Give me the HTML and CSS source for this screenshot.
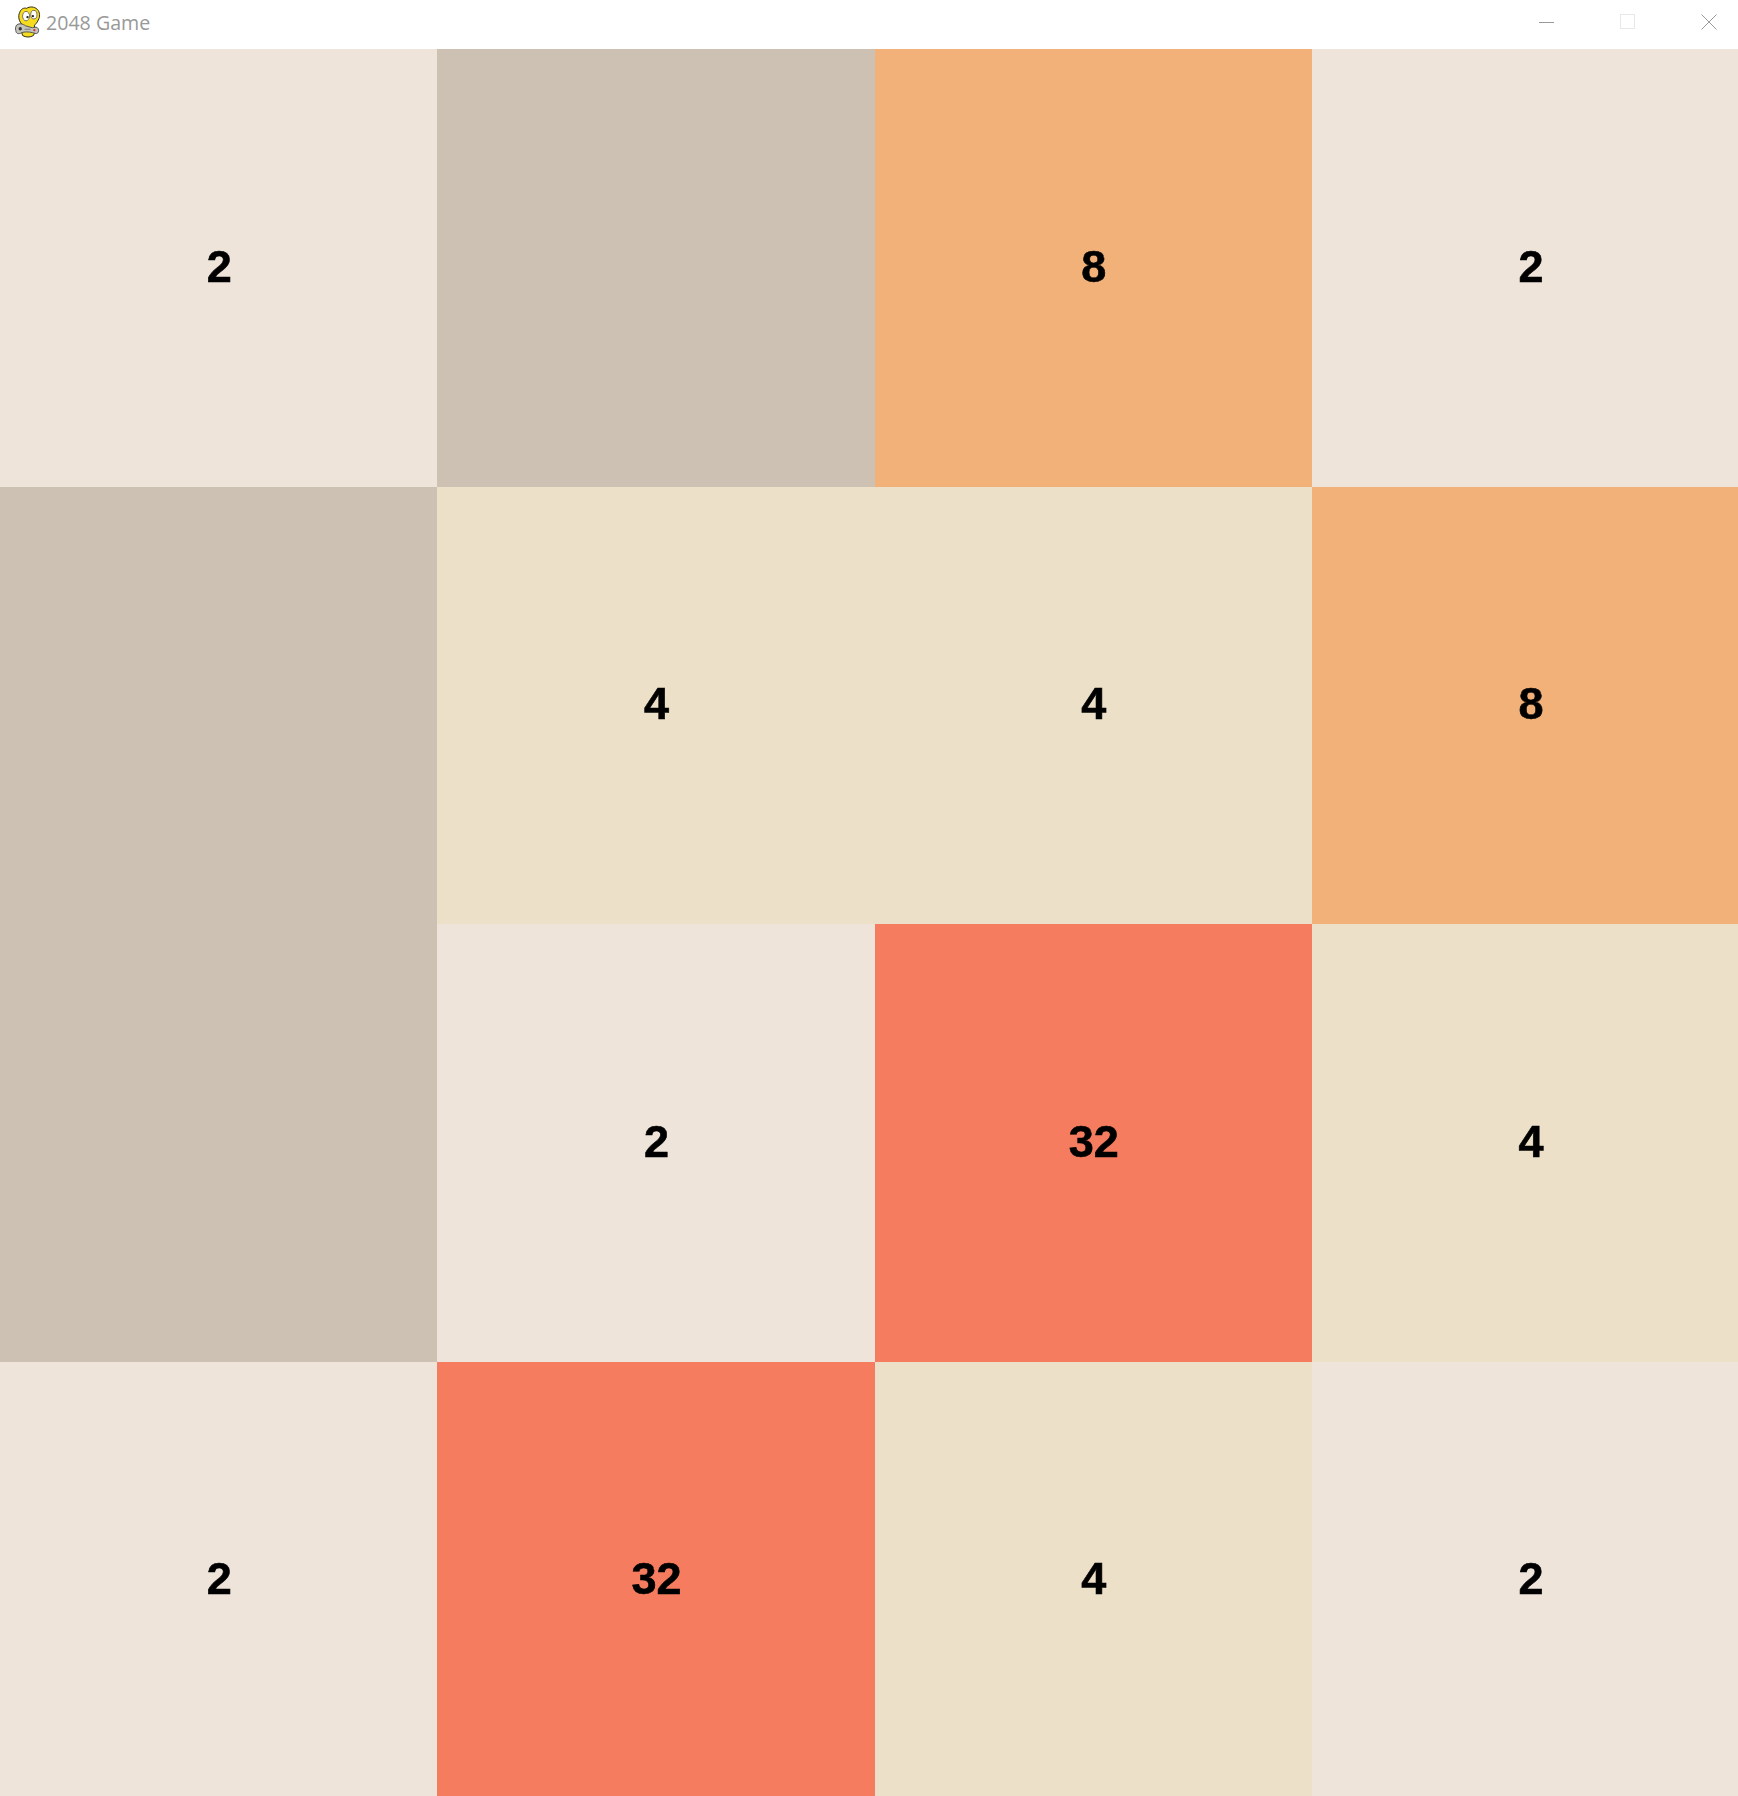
FILE: index.html
```html
<!DOCTYPE html>
<html lang="en">
<head>
    <meta charset="UTF-8">
    <title>2048 Game</title>
    <link rel="stylesheet" href="styles.css">
</head>
<body>

    <div class="titlebar">
        <svg class="app-icon" viewBox="0 0 36 36" width="35" height="36">
            <path d="M12 34 C10 30 11 26 12 23 C8 20 7 14 9 10 C10 7 13 5 16 6 C19 4 24 4 27 7 C30 10 30 15 28 18 C27 21 25 22 24 24 C25 27 25 31 23 34 C20 36 15 36 12 34 Z" fill="#f5dc1e" stroke="#2a2410" stroke-width="1"/>
            <ellipse cx="15.5" cy="14" rx="3.6" ry="4.8" fill="#fff" stroke="#555" stroke-width="0.8"/>
            <ellipse cx="23.5" cy="12.5" rx="3.2" ry="4.4" fill="#fff" stroke="#555" stroke-width="0.8"/>
            <circle cx="17" cy="15" r="1.2" fill="#222"/>
            <circle cx="22.5" cy="14" r="1.2" fill="#222"/>
            <path d="M6 23 C9 21 12 22 15 24 L22 26 C25 25 27 25 28 27 C29 29 28 32 26 32 L22 31 C18 30 14 30 11 31 C8 33 5 32 5 29 C4 27 5 24 6 23 Z" fill="#c4c4bc" stroke="#444" stroke-width="0.9"/>
            <circle cx="9.5" cy="27" r="1.7" fill="#333"/>
            <path d="M14 27.5H20" stroke="#777" stroke-width="1"/>
            <circle cx="24" cy="28.5" r="1.2" fill="#c33"/>
        </svg>
        <span class="title">2048 Game</span>
        <div class="win-buttons">
            <svg class="win-btn" viewBox="0 0 16 16" width="16" height="16"><path d="M0 8.5H15" stroke="#999" stroke-width="1"/></svg>
            <svg class="win-btn" viewBox="0 0 16 16" width="16" height="16"><rect x="0.5" y="0.5" width="14" height="14" fill="none" stroke="#e8e8e8" stroke-width="1"/></svg>
            <svg class="win-btn" viewBox="0 0 16 16" width="16" height="16"><path d="M0.5 0.5L15.5 15.5M15.5 0.5L0.5 15.5" stroke="#999" stroke-width="1"/></svg>
        </div>
    </div>

    <div class="board">
        <div class="cell t2">2</div>
        <div class="cell empty"></div>
        <div class="cell t8">8</div>
        <div class="cell t2">2</div>

        <div class="cell empty"></div>
        <div class="cell t4">4</div>
        <div class="cell t4">4</div>
        <div class="cell t8">8</div>

        <div class="cell empty"></div>
        <div class="cell t2">2</div>
        <div class="cell t32">32</div>
        <div class="cell t4">4</div>

        <div class="cell t2">2</div>
        <div class="cell t32">32</div>
        <div class="cell t4">4</div>
        <div class="cell t2">2</div>
    </div>

</body>
</html>
```

FILE: styles.css
```css
html, body {
    margin: 0;
    height: 100%;
    overflow: hidden;
    background-color: white;
}

.titlebar {
    height: 49px;
    display: flex;
    align-items: center;
    padding-left: 11px;
    padding-bottom: 5px;
    box-sizing: border-box;
    background-color: white;
}

.app-icon {
    margin-bottom: 4px;
}

.title {
    font-family: "Open Sans", sans-serif;
    font-size: 19.6px;
    color: #999;
}

.win-buttons {
    margin-left: auto;
    display: flex;
    gap: 65px;
    padding-right: 21px;
}

.board {
    display: grid;
    grid-template-columns: repeat(4, 437.3px);
    grid-template-rows: repeat(4, 437.5px);
}

.cell {
    display: flex;
    align-items: center;
    justify-content: center;
    padding-bottom: 2px;
    padding-left: 1px;
    box-sizing: border-box;
    font-family: "Liberation Sans", Arial, sans-serif;
    font-weight: bold;
    font-size: 45px;
    color: black;
    -webkit-text-stroke: 0.6px black;
    filter: blur(0.4px);
}

.empty { background-color: #cdc1b4; }
.t2 { background-color: #eee4da; }
.t4 { background-color: #ede0c8; }
.t8 { background-color: #f2b179; }
.t32 { background-color: #f67c5f; }
```
